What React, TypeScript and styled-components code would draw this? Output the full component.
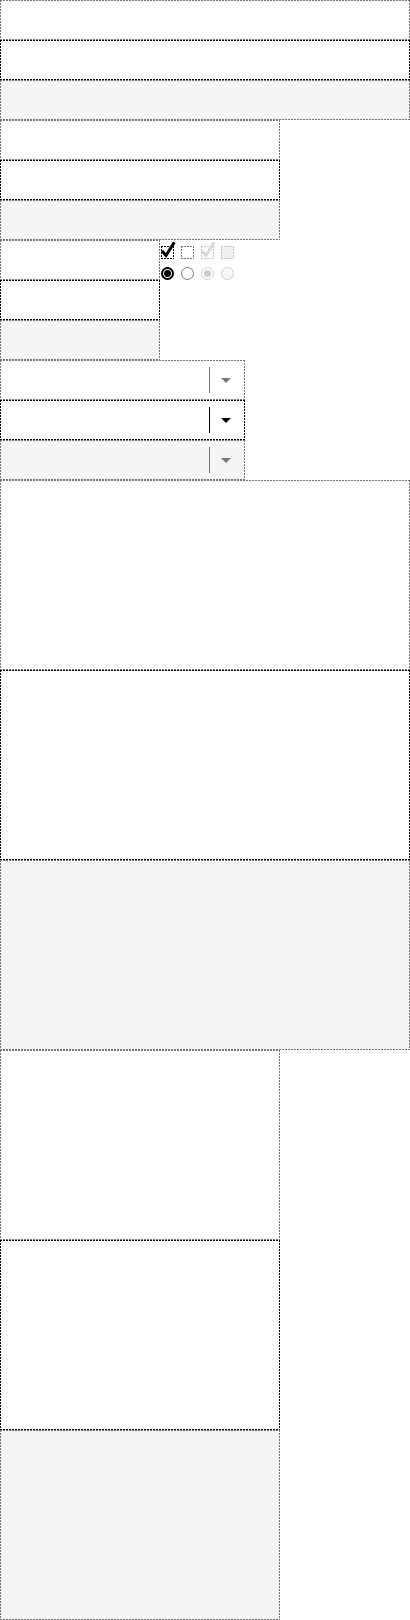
import React, {FC} from "react";
import styled, {createGlobalStyle, css} from "styled-components";

type State = "normal" | "focus" | "disabled";

const GlobalStyle = createGlobalStyle`
  html, body {
    margin: 0;
    padding: 0;
    background: #fff;
    font-family: "Liberation Sans", Arial, sans-serif;
  }
`

// dotted frame drawn as 2px-on / 1px-off dashes on each edge
const dots = (c: string) => css`
  background-image:
    repeating-linear-gradient(90deg, ${c} 0 2px, transparent 2px 3px),
    repeating-linear-gradient(90deg, ${c} 0 2px, transparent 2px 3px),
    repeating-linear-gradient(180deg, ${c} 0 2px, transparent 2px 3px),
    repeating-linear-gradient(180deg, ${c} 0 2px, transparent 2px 3px);
  background-size: 100% 1px, 100% 1px, 1px 100%, 1px 100%;
  background-position: left top, left bottom, left top, right top;
  background-repeat: no-repeat;
`

const lineColor = (s: State) => (s === "focus" ? "#000" : "#767676");

const fieldLook = css<{ $state: State }>`
  box-sizing: border-box;
  display: block;
  margin: 0;
  padding: 0 8px;
  border: none;
  border-radius: 0;
  outline: none;
  font: inherit;
  color: #000;
  ${({$state}) => dots(lineColor($state))};
  background-color: ${({$state}) => ($state === "disabled" ? "#f5f5f5" : "#fff")};
`

const Page = styled.main`
  display: flex;
  flex-direction: column;
  width: 410px;
`

const Stack = styled.div`
  display: flex;
  flex-direction: column;
`

const TextInput = styled.input<{ $state: State; $width: number }>`
  ${fieldLook};
  width: ${({$width}) => $width}px;
  height: 40px;
`

const TextArea = styled.textarea<{ $state: State; $width: number }>`
  ${fieldLook};
  width: ${({$width}) => $width}px;
  height: 190px;
  resize: none;
`

const SplitRow = styled.div`
  display: flex;
  align-items: flex-start;
`

const Toggles = styled.div`
  display: flex;
  flex-direction: column;
  gap: 8px;
  padding: 6px 0 0 1px;
`

const ToggleRow = styled.div`
  display: flex;
  gap: 7px;
`

const Box = styled.span<{ $state: State; $checked?: boolean }>`
  position: relative;
  box-sizing: border-box;
  width: 13px;
  height: 13px;
  ${({$state}) =>
    dots($state === "focus" ? "#000" : $state === "disabled" ? "#c4c4c4" : "#767676")};
  background-color: ${({$state, $checked}) =>
    $state === "disabled" && !$checked ? "#f0f0f0" : "#fff"};

  svg {
    position: absolute;
    left: 0;
    top: -5px;
    overflow: visible;
  }
`

const Radio = styled.span<{ $state: State; $checked?: boolean }>`
  box-sizing: border-box;
  display: flex;
  align-items: center;
  justify-content: center;
  width: 13px;
  height: 13px;
  border-radius: 50%;
  border: ${({$state, $checked}) =>
    $state === "disabled"
      ? "1px solid #cfcfcf"
      : $checked
        ? "2px solid #000"
        : "1px solid #767676"};
  background: ${({$state, $checked}) =>
    $state === "disabled" && !$checked ? "#f7f7f7" : "#fff"};

  &::after {
    content: "";
    display: ${({$checked}) => ($checked ? "block" : "none")};
    width: 7px;
    height: 7px;
    border-radius: 50%;
    background: ${({$state}) => ($state === "disabled" ? "#cdcdcd" : "#000")};
  }
`

const SelectBox = styled.div<{ $state: State }>`
  ${fieldLook};
  display: flex;
  align-items: center;
  width: 245px;
  height: 40px;
  padding: 0;
`

const SelectValue = styled.span`
  flex: 1;
`

const Divider = styled.span<{ $state: State }>`
  width: 1px;
  height: 26px;
  background: ${({$state}) => lineColor($state)};
`

const Arrow = styled.span<{ $state: State }>`
  width: 0;
  height: 0;
  margin: 1px 14px 0 11px;
  border-left: 5px solid transparent;
  border-right: 5px solid transparent;
  border-top: 5px solid ${({$state}) => lineColor($state)};
`

const states: State[] = ["normal", "focus", "disabled"];

const Check: FC<{ color: string }> = ({color}) => (
  <svg width="13" height="17" viewBox="0 0 13 17">
    <path d="M2 11 L5 14.5 L12.5 2.5" fill="none" stroke={color} strokeWidth="3"
          strokeLinecap="square"/>
  </svg>
)

const Select: FC<{ state: State }> = ({state}) => (
  <SelectBox $state={state} role="combobox" aria-disabled={state === "disabled"}>
    <SelectValue/>
    <Divider $state={state}/>
    <Arrow $state={state}/>
  </SelectBox>
)

export default function App() {
  return (
    <Page>
      <GlobalStyle/>
      <Stack>
        {states.map((s) => (
          <TextInput key={s} $state={s} $width={410} disabled={s === "disabled"} readOnly/>
        ))}
      </Stack>
      <Stack>
        {states.map((s) => (
          <TextInput key={s} $state={s} $width={280} disabled={s === "disabled"} readOnly/>
        ))}
      </Stack>
      <SplitRow>
        <Stack>
          {states.map((s) => (
            <TextInput key={s} $state={s} $width={160} disabled={s === "disabled"} readOnly/>
          ))}
        </Stack>
        <Toggles>
          <ToggleRow>
            <Box $state="focus" $checked><Check color="#000"/></Box>
            <Box $state="normal"/>
            <Box $state="disabled" $checked><Check color="#d9d9d9"/></Box>
            <Box $state="disabled"/>
          </ToggleRow>
          <ToggleRow>
            <Radio $state="normal" $checked/>
            <Radio $state="normal"/>
            <Radio $state="disabled" $checked/>
            <Radio $state="disabled"/>
          </ToggleRow>
        </Toggles>
      </SplitRow>
      <Stack>
        {states.map((s) => (
          <Select key={s} state={s}/>
        ))}
      </Stack>
      <Stack>
        {states.map((s) => (
          <TextArea key={s} $state={s} $width={410} disabled={s === "disabled"} readOnly/>
        ))}
      </Stack>
      <Stack>
        {states.map((s) => (
          <TextArea key={s} $state={s} $width={280} disabled={s === "disabled"} readOnly/>
        ))}
      </Stack>
    </Page>
  )
}
